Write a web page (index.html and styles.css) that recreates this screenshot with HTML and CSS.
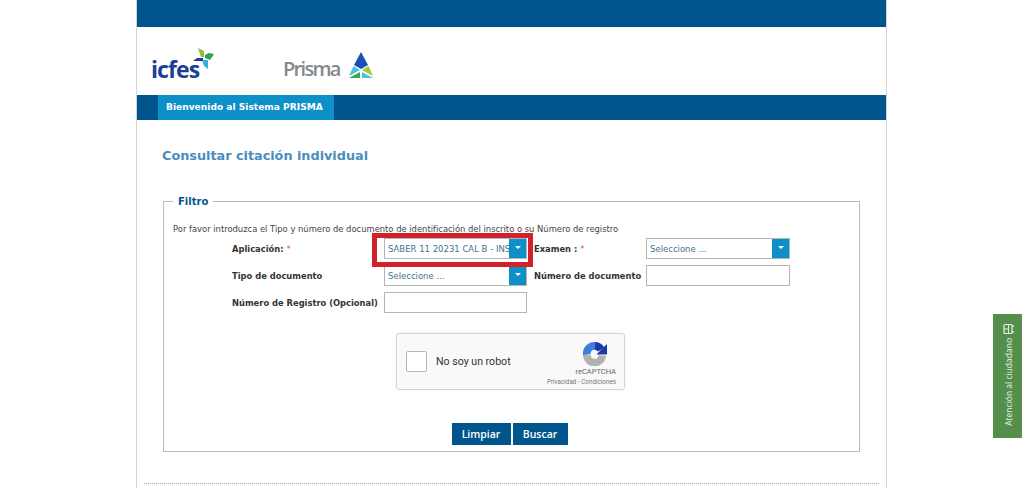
FILE: index.html
```html
<!DOCTYPE html>
<html lang="es">
<head>
    <meta charset="UTF-8">
    <meta name="viewport" content="width=device-width, initial-scale=1.0">
    <title>Consultar citación individual</title>
    <link rel="stylesheet" href="styles.css">
</head>
<body>
    <div class="page">
        <div class="top-bar"></div>

        <header class="logos">
            <div class="logo-icfes">
                <span class="icfes-name">icfes</span>
                <svg class="icfes-mark" width="22" height="22" viewBox="0 0 22 22">
                    <polygon points="5,0 11,3 11,9 8,9" fill="#8fc03a"/>
                    <polygon points="12,7 16,5 21,6 17,12 12,10" fill="#2f9e58"/>
                    <polygon points="9,12 15,12 15,21 11,18" fill="#35b3d6"/>
                    <polygon points="0,13 4,10 10,10 10,13" fill="#1a3f9c"/>
                </svg>
            </div>
            <div class="logo-prisma">
                <span class="prisma-name">Prisma</span>
                <svg width="26" height="26" viewBox="0 0 26 26">
                    <polygon points="13,0 20,13 13,17 6,13" fill="#1a4fb5"/>
                    <polygon points="5.5,14 12,18 1,24" fill="#4cc3d9"/>
                    <polygon points="20.5,14 14,18 25,24" fill="#a4c93a"/>
                    <polygon points="1,26 12,20 12,26" fill="#3aa655"/>
                    <polygon points="14,20 25,26 14,26" fill="#4cc3d9"/>
                </svg>
            </div>
        </header>

        <nav class="nav-bar">
            <a href="#" class="nav-tab">Bienvenido al Sistema PRISMA</a>
        </nav>

        <main class="content">
            <h1 class="title">Consultar citación individual</h1>

            <fieldset class="filter">
                <legend>Filtro</legend>
                <p class="hint">Por favor introduzca el Tipo y número de documento de identificación del inscrito o su Número de registro</p>

                <div class="form-grid">
                    <label class="field-label">Aplicación: <span class="req">*</span></label>
                    <div class="select-box highlighted">
                        <span class="select-value">SABER 11 20231 CAL B - INS</span>
                        <span class="select-btn"><i></i></span>
                    </div>
                    <label class="field-label">Examen : <span class="req">*</span></label>
                    <div class="select-box">
                        <span class="select-value">Seleccione ...</span>
                        <span class="select-btn"><i></i></span>
                    </div>

                    <label class="field-label">Tipo de documento</label>
                    <div class="select-box">
                        <span class="select-value">Seleccione ...</span>
                        <span class="select-btn"><i></i></span>
                    </div>
                    <label class="field-label">Número de documento</label>
                    <input class="text-box" type="text">

                    <label class="field-label">Número de Registro (Opcional)</label>
                    <input class="text-box" type="text">
                </div>

                <div class="captcha">
                    <span class="captcha-check"></span>
                    <span class="captcha-text">No soy un robot</span>
                    <div class="captcha-brand">
                        <svg width="25" height="25" viewBox="0 0 26 26">
                            <path d="M5 14A8 8 0 0 0 21 15" fill="none" stroke="#b2b2b2" stroke-width="8"/>
                            <path d="M5 14A8 8 0 0 1 13 5" fill="none" stroke="#3f7fdc" stroke-width="8"/>
                            <path d="M13 5A8 8 0 0 1 20 9" fill="none" stroke="#1c3aa9" stroke-width="8"/>
                            <polygon points="26,3 26,14 15,14" fill="#1c3aa9"/>
                        </svg>
                        <span class="captcha-name">reCAPTCHA</span>
                        <span class="captcha-links">Privacidad - Condiciones</span>
                    </div>
                </div>

                <div class="actions">
                    <button class="btn" type="button">Limpiar</button>
                    <button class="btn" type="button">Buscar</button>
                </div>
            </fieldset>

            <div class="dotted-line"></div>
        </main>
    </div>

    <a href="#" class="side-tab">
        <svg class="side-icon" width="12" height="12" viewBox="0 0 12 12">
            <rect x="1.5" y="1" width="9" height="8" rx="1" fill="none" stroke="#e6f0e0" stroke-width="1.2"/>
            <path d="M1.5 5.5h9M6 1v4.5" stroke="#e6f0e0" stroke-width="1"/>
            <path d="M3 9v2M9 9v2" stroke="#e6f0e0" stroke-width="1.4"/>
        </svg>
        <span>Atención al ciudadano</span>
    </a>
</body>
</html>
```

FILE: styles.css
```css
html, body {
    height: 100%;
    overflow: hidden;
}

body {
    margin: 0;
    background-color: #fff;
    font-family: "DejaVu Sans", Verdana, sans-serif;
    font-size: 9px;
    color: #333;
}

.page {
    width: 749px;
    margin-left: 136px;
    border-left: 1px solid #d4d4d4;
    border-right: 1px solid #d4d4d4;
    min-height: 488px;
}

.top-bar {
    height: 27px;
    background-color: #00568c;
}

/* logos */
.logos {
    height: 68px;
    display: flex;
    align-items: flex-start;
}

.logo-icfes {
    display: flex;
    align-items: flex-start;
    margin: 21px 0 0 14px;
    width: 132px;
}

.icfes-name {
    font-family: "Open Sans", sans-serif;
    font-size: 23px;
    font-weight: 700;
    letter-spacing: -0.9px;
    line-height: 24px;
    margin-top: 9px;
    color: #1b3f94;
}

.icfes-mark {
    margin-left: -6px;
}

.logo-prisma {
    display: flex;
    align-items: flex-end;
    gap: 8px;
    margin-top: 25px;
}

.prisma-name {
    font-family: "Open Sans", sans-serif;
    font-size: 20px;
    font-weight: 600;
    line-height: 24px;
    letter-spacing: -1.7px;
    margin-bottom: -3px;
    color: #85888a;
}

/* nav */
.nav-bar {
    height: 25px;
    background-color: #00568c;
    padding-left: 21px;
}

.nav-tab {
    display: inline-block;
    width: 176px;
    height: 25px;
    line-height: 24px;
    box-sizing: border-box;
    padding-left: 8px;
    background-color: #0d8fc7;
    color: #fff;
    font-size: 9.1px;
    font-weight: bold;
    text-decoration: none;
}

/* content */
.content {
    padding: 28px 7px 0 7px;
}

.title {
    margin: 0 0 31px 18px;
    font-size: 12.8px;
    line-height: 16px;
    font-weight: bold;
    color: #4a8dbd;
}

.filter {
    margin: 0 19px 0 19px;
    padding: 0 10px 0 9px;
    height: 255px;
    border: 1px solid #b9b9b9;
    min-width: 0;
}

.filter legend {
    margin-left: 0;
    padding: 0 5px 0 5px;
    font-size: 10px;
    font-weight: bold;
    line-height: 13px;
    color: #00568c;
}

.hint {
    margin: 15px 0 0 0;
    font-size: 8.4px;
    line-height: 12px;
    color: #444;
    white-space: nowrap;
}

.form-grid {
    display: grid;
    grid-template-columns: 152px 143px 119px 144px;
    grid-auto-rows: 21px;
    row-gap: 6px;
    margin: 3px 0 0 59px;
    align-items: center;
}

.field-label {
    font-size: 8.35px;
    font-weight: bold;
    color: #333;
    white-space: nowrap;
}

.form-grid .field-label:nth-child(4n + 3) {
    padding-left: 7px;
}

.req {
    color: #d9534f;
    font-weight: normal;
}

.select-box {
    position: relative;
    display: flex;
    height: 21px;
    box-sizing: border-box;
    border: 1px solid #b5b5b5;
    background-color: #fff;
}

.select-value {
    flex: 1;
    overflow: hidden;
    white-space: nowrap;
    line-height: 20px;
    padding-left: 3px;
    font-size: 8.5px;
    color: #3f7391;
}

.select-btn {
    width: 17px;
    background-color: #0d8fc7;
    display: flex;
    align-items: center;
    justify-content: center;
}

.select-btn i {
    width: 0;
    height: 0;
    border-left: 3px solid transparent;
    border-right: 3px solid transparent;
    border-top: 3px solid #fff;
    margin-bottom: 2px;
}

/* marca roja sobre el campo */
.highlighted::after {
    content: "";
    position: absolute;
    z-index: 1;
    left: -13px;
    top: -6px;
    width: 151px;
    height: 24px;
    border: 5px solid #d3212c;
    pointer-events: none;
}

.text-box {
    height: 21px;
    box-sizing: border-box;
    border: 1px solid #b5b5b5;
    padding: 0 3px;
    margin: 0;
    background-color: #fff;
}

/* captcha */
.captcha {
    width: 229px;
    height: 57px;
    margin: 20px 0 0 223px;
    box-sizing: border-box;
    display: flex;
    align-items: center;
    position: relative;
    background-color: #f9f9f9;
    border: 1px solid #d6d6d6;
    border-radius: 3px;
    box-shadow: 0 0 3px rgba(0, 0, 0, 0.08);
    font-family: Roboto, sans-serif;
}

.captcha-check {
    width: 21px;
    height: 21px;
    box-sizing: border-box;
    margin-left: 9px;
    background-color: #fff;
    border: 1px solid #b5b5b5;
    border-radius: 2px;
}

.captcha-text {
    margin-left: 9px;
    font-size: 10.6px;
    color: #333;
}

.captcha-brand {
    position: absolute;
    right: 8px;
    top: 7px;
    display: flex;
    flex-direction: column;
    align-items: flex-end;
}

.captcha-brand svg {
    display: block;
    margin-right: 9px;
}

.captcha-name {
    font-size: 7.5px;
    line-height: 12px;
    color: #666;
}

.captcha-links {
    font-size: 6.3px;
    line-height: 9px;
    color: #777;
}

.actions {
    display: flex;
    justify-content: center;
    gap: 2px;
    margin-top: 33px;
    padding-right: 3px;
}

.btn {
    height: 22px;
    padding: 0;
    border: 0;
    background-color: #00568c;
    color: #fff;
    font-family: "Open Sans", sans-serif;
    font-size: 10.5px;
    font-weight: 600;
}

.btn:first-child {
    width: 59px;
}

.btn:last-child {
    width: 55px;
}

.dotted-line {
    margin-top: 31px;
    border-top: 1px dotted #aaa;
}

/* pestaña lateral */
.side-tab {
    position: fixed;
    left: 993px;
    top: 314px;
    width: 29px;
    height: 124px;
    box-sizing: border-box;
    padding: 9px 0 6px 2px;
    display: flex;
    flex-direction: column;
    align-items: center;
    gap: 3px;
    background-color: #558f4b;
    color: #e6f0e0;
    text-decoration: none;
    font-family: "Open Sans", sans-serif;
    font-size: 8.5px;
}

.side-icon {
    transform: rotate(-90deg);
}

.side-tab span {
    writing-mode: vertical-rl;
    transform: rotate(180deg);
    white-space: nowrap;
}
```
